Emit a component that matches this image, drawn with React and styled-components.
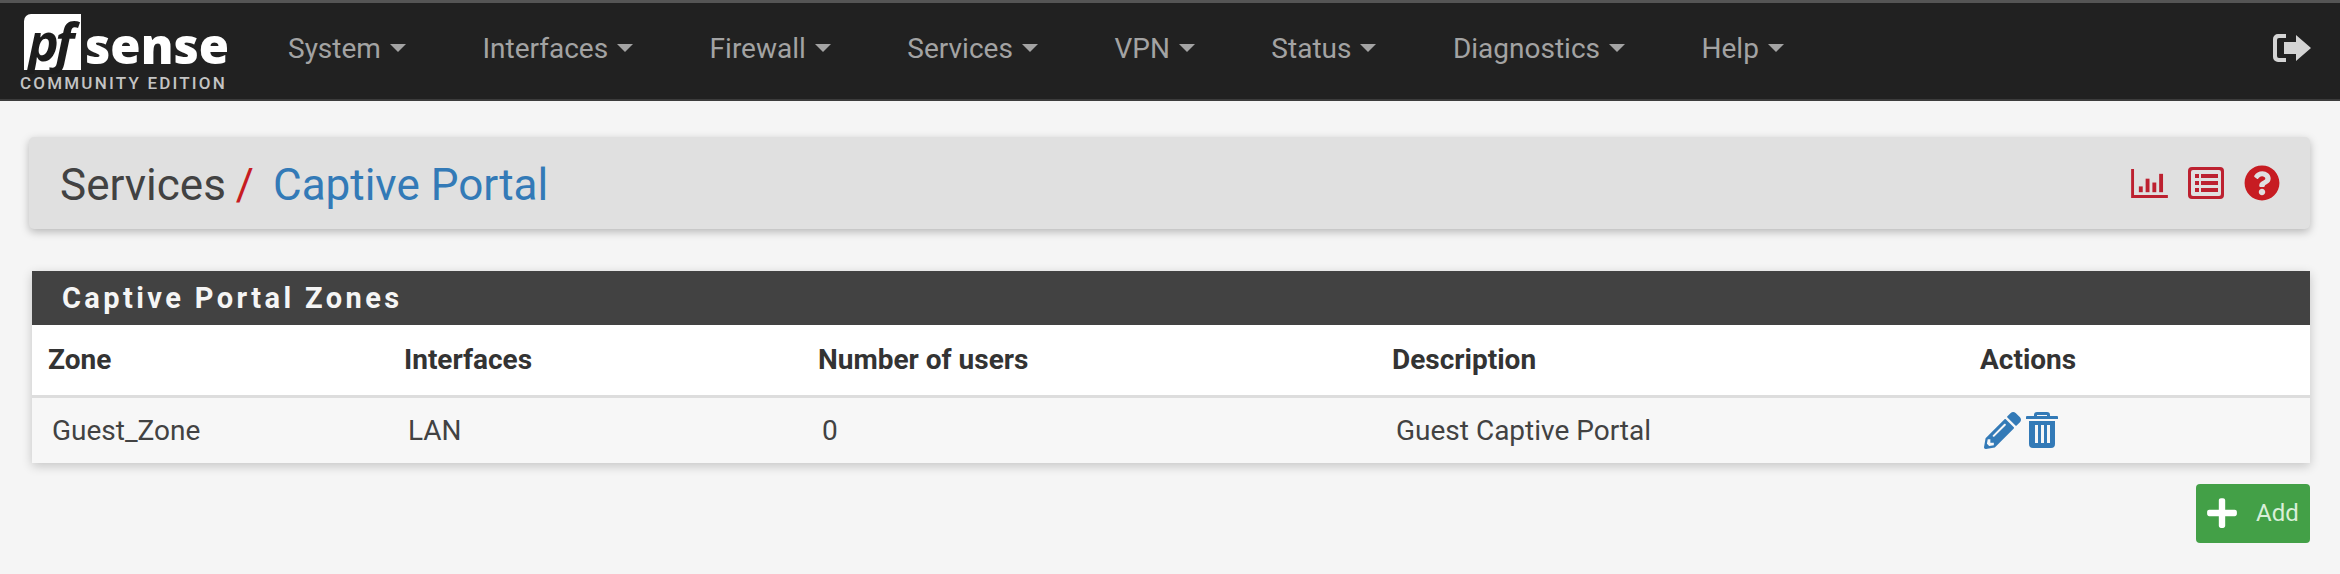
import React from 'react';
import styled, { createGlobalStyle } from 'styled-components';
import { FaPlus, FaQuestionCircle, FaPencilAlt } from 'react-icons/fa';

const Global = createGlobalStyle`
  html, body {
    margin: 0;
    padding: 0;
    background: #f5f5f5;
    font-family: Roboto, "Liberation Sans", sans-serif;
  }
`;

const Page = styled.div`
  width: 2340px;
  height: 574px;
  overflow: hidden;
  background: #f5f5f5;
`;

const Navbar = styled.nav`
  display: flex;
  align-items: center;
  height: 101px;
  box-sizing: border-box;
  background: #212121;
  border-top: 3px solid #555;
  border-bottom: 2px solid #3c3c3c;
  padding: 0 29px 0 20px;
`;

const Brand = styled.div`
  display: flex;
  flex-direction: column;
  width: 206px;
  margin-right: 62px;
  margin-top: 4px;
`;

const LogoRow = styled.div`
  display: flex;
  align-items: flex-end;
  height: 56px;
`;

const LogoMark = styled.div`
  position: relative;
  width: 57px;
  height: 56px;
  margin-left: 4px;
  background: #fff;
  border-radius: 7px 0 0 0;
  flex: none;
`;

const LogoPf = styled.span`
  position: absolute;
  left: 4px;
  top: 0;
  font: italic 700 52px/54px "Open Sans", sans-serif;
  letter-spacing: -4px;
  color: #1c1c1c;
`;

const LogoSense = styled.span`
  font: 800 49px/50px "Open Sans", sans-serif;
  letter-spacing: 0;
  color: #fff;
  margin-left: 4px;
`;

const Edition = styled.div`
  font-size: 17px;
  font-weight: 500;
  line-height: 20px;
  letter-spacing: 2.2px;
  color: #c4c4c4;
  white-space: nowrap;
  margin-top: 3px;
`;

const Menu = styled.ul`
  display: flex;
  flex: 1;
  gap: 76.5px;
  list-style: none;
  margin: 0;
  padding: 0;
`;

const MenuItem = styled.li`
  display: flex;
  align-items: center;
  gap: 9px;
  font-size: 28px;
  color: #a3a3a3;
  margin-top: -6px;
`;

const Caret = styled.span`
  width: 0;
  height: 0;
  border-left: 8px solid transparent;
  border-right: 8px solid transparent;
  border-top: 8px solid #a3a3a3;
`;

const SignOut = styled.div`
  display: flex;
  margin-top: -6px;
`;

const Content = styled.main`
  padding: 36px 30px 0 32px;
`;

const Heading = styled.header`
  display: flex;
  align-items: center;
  justify-content: space-between;
  height: 92px;
  margin: 0 0 42px -3px;
  padding: 0 30px 0 31px;
  background: #e0e0e0;
  border-radius: 5px;
  box-shadow: 0 3px 8px rgba(0, 0, 0, 0.25);
`;

const Crumbs = styled.h1`
  margin: 3px 0 0;
  font-size: 44px;
  font-weight: 400;
  color: #424242;
`;

const Slash = styled.span`
  color: #c71c22;
  margin: 0 19px 0 10px;
`;

const CrumbLink = styled.span`
  color: #337ab7;
`;

const HeadingIcons = styled.div`
  display: flex;
  align-items: center;
  gap: 20px;
  color: #bd2130;
`;

const Panel = styled.section`
  background: #fff;
  box-shadow: 0 3px 10px rgba(0, 0, 0, 0.2);
`;

const PanelTitle = styled.h2`
  margin: 0;
  height: 54px;
  box-sizing: border-box;
  padding-left: 30px;
  background: #424242;
  color: #f5f5f5;
  font-size: 29px;
  font-weight: 700;
  line-height: 54px;
  letter-spacing: 3.4px;
`;

const Table = styled.table`
  width: 100%;
  table-layout: fixed;
  border-collapse: collapse;
`;

const Th = styled.th`
  width: ${({ $w }) => $w}px;
  height: 71px;
  box-sizing: border-box;
  padding: 0 0 0 16px;
  text-align: left;
  font-size: 28px;
  font-weight: 700;
  color: #333;
  border-bottom: 3px solid #ddd;
`;

const Td = styled.td`
  height: 65px;
  padding: 0 0 0 20px;
  font-size: 28px;
  color: #424242;
  background: #f7f7f7;
`;

const ActionIcons = styled.div`
  display: flex;
  align-items: center;
  gap: 5px;
  color: #337ab7;
`;

const Footer = styled.div`
  display: flex;
  justify-content: flex-end;
  margin-top: 21px;
`;

const AddButton = styled.button`
  display: flex;
  align-items: center;
  gap: 17px;
  width: 114px;
  height: 59px;
  padding: 0 0 0 9px;
  border: 0;
  border-radius: 4px;
  background: #43a047;
  color: #d9efd9;
  font-family: inherit;
  font-size: 24px;
  svg {
    color: #fff;
    flex: none;
  }
`;

const BarsIcon = () => (
  <svg width="37" height="29" viewBox="0 0 38 30" fill="currentColor">
    <path d="M0 0h3v27h35v3H0z" />
    <rect x="8" y="18" width="4" height="6" />
    <rect x="15" y="10" width="4" height="14" />
    <rect x="22" y="14" width="4" height="10" />
    <rect x="29" y="5" width="4" height="19" />
  </svg>
);

const ListIcon = () => (
  <svg width="36" height="32" viewBox="0 0 36 32" fill="currentColor">
    <path fillRule="evenodd" d="M4 0h28a4 4 0 0 1 4 4v24a4 4 0 0 1-4 4H4a4 4 0 0 1-4-4V4a4 4 0 0 1 4-4zm-1 5v22a2 2 0 0 0 2 2h26a2 2 0 0 0 2-2V5a2 2 0 0 0-2-2H5a2 2 0 0 0-2 2z" />
    <rect x="7" y="7" width="4" height="4" />
    <rect x="7" y="14" width="4" height="4" />
    <rect x="7" y="21" width="4" height="4" />
    <rect x="13" y="7" width="17" height="4" />
    <rect x="13" y="14" width="17" height="4" />
    <rect x="13" y="21" width="17" height="4" />
  </svg>
);

const TrashIcon = () => (
  <svg width="32" height="36" viewBox="0 0 32 36" fill="currentColor">
    <path d="M11 0h10a3 3 0 0 1 3 3v1h7a1 1 0 0 1 1 1v2H0V5a1 1 0 0 1 1-1h7V3a3 3 0 0 1 3-3zm0 3v1h10V3z" fillRule="evenodd" />
    <path fillRule="evenodd" d="M3 9h26v23a4 4 0 0 1-4 4H7a4 4 0 0 1-4-4zm6 4v18h3V13zm6 0v18h3V13zm6 0v18h3V13z" />
  </svg>
);

const SignOutIcon = () => (
  <svg width="38" height="28" viewBox="0 0 38 28" fill="#d4d4d4">
    <path d="M5 0h8v4H6a2 2 0 0 0-2 2v16a2 2 0 0 0 2 2h7v4H5a5 5 0 0 1-5-5V5a5 5 0 0 1 5-5z" />
    <path d="M23 1l15 13-15 13v-7H11V8h12z" />
  </svg>
);

const navItems = ['System', 'Interfaces', 'Firewall', 'Services', 'VPN', 'Status', 'Diagnostics', 'Help'];

const columns = [
  ['Zone', 356],
  ['Interfaces', 414],
  ['Number of users', 574],
  ['Description', 588],
  ['Actions', 346],
];

export default function App() {
  return (
    <Page>
      <Global />
      <Navbar>
        <Brand>
          <LogoRow>
            <LogoMark>
              <LogoPf>pf</LogoPf>
            </LogoMark>
            <LogoSense>sense</LogoSense>
          </LogoRow>
          <Edition>COMMUNITY EDITION</Edition>
        </Brand>
        <Menu>
          {navItems.map((item) => (
            <MenuItem key={item}>
              {item}
              <Caret />
            </MenuItem>
          ))}
        </Menu>
        <SignOut>
          <SignOutIcon />
        </SignOut>
      </Navbar>
      <Content>
        <Heading>
          <Crumbs>
            Services<Slash>/</Slash>
            <CrumbLink>Captive Portal</CrumbLink>
          </Crumbs>
          <HeadingIcons>
            <BarsIcon />
            <ListIcon />
            <FaQuestionCircle size={36} color="#c71c22" />
          </HeadingIcons>
        </Heading>
        <Panel>
          <PanelTitle>Captive Portal Zones</PanelTitle>
          <Table>
            <thead>
              <tr>
                {columns.map(([name, w]) => (
                  <Th key={name} $w={w}>{name}</Th>
                ))}
              </tr>
            </thead>
            <tbody>
              <tr>
                <Td>Guest_Zone</Td>
                <Td>LAN</Td>
                <Td>0</Td>
                <Td>Guest Captive Portal</Td>
                <Td>
                  <ActionIcons>
                    <FaPencilAlt size={37} />
                    <TrashIcon />
                  </ActionIcons>
                </Td>
              </tr>
            </tbody>
          </Table>
        </Panel>
        <Footer>
          <AddButton>
            <FaPlus size={34} />
            Add
          </AddButton>
        </Footer>
      </Content>
    </Page>
  );
}
